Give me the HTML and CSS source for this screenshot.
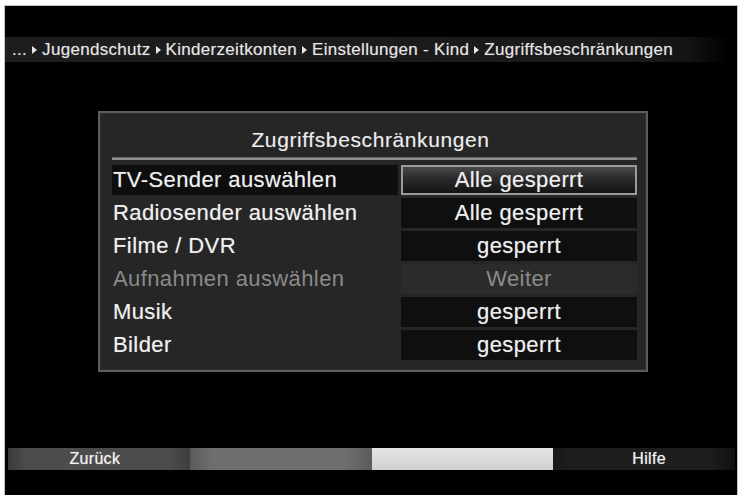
FILE: index.html
```html
<!DOCTYPE html>
<html lang="de">
<head>
<meta charset="utf-8">
<title>Zugriffsbeschränkungen</title>
<link rel="stylesheet" href="styles.css">
</head>
<body>
<div class="screen">
  <div class="crumbs">
    <span>...</span><i class="tri"></i><span>Jugendschutz</span><i class="tri"></i><span>Kinderzeitkonten</span><i class="tri"></i><span>Einstellungen - Kind</span><i class="tri"></i><span>Zugriffsbeschränkungen</span>
  </div>

  <div class="panel">
    <div class="panel-title">Zugriffsbeschränkungen</div>
    <div class="rule"></div>
    <div class="rows">
      <div class="row is-focused">
        <div class="label">TV-Sender auswählen</div>
        <div class="value">Alle gesperrt</div>
      </div>
      <div class="row">
        <div class="label">Radiosender auswählen</div>
        <div class="value">Alle gesperrt</div>
      </div>
      <div class="row">
        <div class="label">Filme / DVR</div>
        <div class="value">gesperrt</div>
      </div>
      <div class="row is-disabled">
        <div class="label">Aufnahmen auswählen</div>
        <div class="value">Weiter</div>
      </div>
      <div class="row">
        <div class="label">Musik</div>
        <div class="value">gesperrt</div>
      </div>
      <div class="row">
        <div class="label">Bilder</div>
        <div class="value">gesperrt</div>
      </div>
    </div>
  </div>

  <div class="keys">
    <div class="key key-red">Zurück</div>
    <div class="key key-green"></div>
    <div class="key key-yellow"></div>
    <div class="key key-blue">Hilfe</div>
  </div>
</div>
</body>
</html>
```

FILE: styles.css
```css
html, body {
  margin: 0;
  padding: 0;
  background: #ffffff;
}

body {
  font-family: "Liberation Sans", Arial, sans-serif;
  color: #eeeeee;
  overflow: hidden;
}

.screen {
  margin: 5px 0 0 4px;
  width: 732px;
  height: 490px;
  background: #000000;
  border: 1px solid #c4c4c4;
  border-bottom: none;
  overflow: hidden;
}

/* breadcrumb */
.crumbs {
  margin-top: 31px;
  height: 25px;
  padding-left: 7px;
  display: flex;
  align-items: center;
  gap: 5px;
  font-size: 17px;
  letter-spacing: 0.3px;
  color: #e6e6e6;
  text-shadow: 0 0 1px rgba(255, 255, 255, 0.35);
  background: linear-gradient(90deg, #1d1d1d 0%, #1a1a1a 85%, #141414 93%, #000000 99%);
}

.tri {
  display: inline-block;
  width: 0;
  height: 0;
  border-top: 4px solid transparent;
  border-bottom: 4px solid transparent;
  border-left: 5px solid #e6e6e6;
}

/* dialog panel */
.panel {
  margin: 49px 0 0 93px;
  width: 525px;
  height: 257px;
  border: 2px solid #5c5c5c;
  background: #262626;
  box-shadow: inset 0 0 0 1px #303030;
  padding: 0 9px 0 12px;
  box-sizing: content-box;
}

.panel-title {
  height: 40px;
  padding-bottom: 4px;
  display: flex;
  align-items: flex-end;
  justify-content: center;
  font-size: 21px;
  letter-spacing: 0.6px;
  color: #ececec;
  line-height: 26px;
  padding-right: 8px;
  text-shadow: 0 0 1px rgba(255, 255, 255, 0.3);
}

.rule {
  height: 2px;
  background: #8e8e8e;
  border-top: 1px solid #6a6a6a;
}

.rows {
  margin-top: 5px;
  display: flex;
  flex-direction: column;
  gap: 3px;
}

.row {
  display: grid;
  grid-template-columns: 286px 1fr;
  column-gap: 3px;
  height: 30px;
}

.label {
  padding-left: 1px;
  font-size: 22px;
  letter-spacing: 0.4px;
  line-height: 30px;
  color: #f0f0f0;
  white-space: nowrap;
  text-shadow: 0 0 1px rgba(255, 255, 255, 0.4);
}

.value {
  background: #0f0f0f;
  font-size: 22px;
  letter-spacing: 0.4px;
  line-height: 30px;
  text-align: center;
  color: #f0f0f0;
  white-space: nowrap;
  text-shadow: 0 0 1px rgba(255, 255, 255, 0.4);
}

.is-focused .label {
  background: #0e0e0e;
}

.is-focused .value {
  box-sizing: border-box;
  border: 2px solid #9a9a9a;
  line-height: 26px;
  background: linear-gradient(180deg, #4a4a4a 0%, #2a2a2a 45%, #141414 100%);
}

.is-disabled .label,
.is-disabled .value {
  color: #8a8a8a;
  text-shadow: none;
}

.is-disabled .value {
  background: #2b2b2b;
}

/* colour keys */
.keys {
  margin: 76px 0 0 3px;
  height: 22px;
  display: grid;
  grid-template-columns: repeat(4, 1fr);
  width: 727px;
}

.key {
  font-size: 16px;
  letter-spacing: 0.3px;
  line-height: 22px;
  text-align: center;
  color: #f2f2f2;
  text-shadow: 0 0 1px rgba(255, 255, 255, 0.6);
}

.key-red {
  background: linear-gradient(90deg, #3a3a3a 0%, #4c4c4c 10%, #4c4c4c 88%, #3e3e3e 100%);
  text-indent: -8px;
}

.key-green {
  background: linear-gradient(90deg, #5a5a5a 0%, #6e6e6e 12%, #6e6e6e 85%, #5c5c5c 100%);
}

.key-yellow {
  background: linear-gradient(180deg, #e4e4e4 0%, #d8d8d8 70%, #cfcfcf 100%);
}

.key-blue {
  background: linear-gradient(90deg, #181818 0%, #1e1e1e 10%, #1e1e1e 85%, #101010 100%);
  text-indent: 10px;
}
```
